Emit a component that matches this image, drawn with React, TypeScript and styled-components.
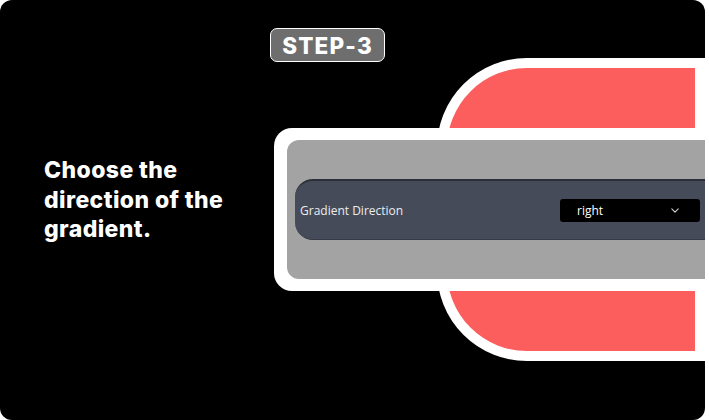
import React from "react";
import styled, { createGlobalStyle } from "styled-components";

const GlobalStyle = createGlobalStyle`
    body {
        margin: 0;
        background: #ffffff;
        font-family: Inter, "Liberation Sans", sans-serif;
    }
`;

export default function App() {
    return (
        <>
            <GlobalStyle />
            <Card>
                <Backdrop />
                <Badge>STEP-3</Badge>
                <Main>
                    <Heading>Choose the direction of the gradient.</Heading>
                    <Panel>
                        <PanelInner>
                            <Row>
                                <Label>Gradient Direction</Label>
                                <Select>
                                    <span>right</span>
                                    <Chevron viewBox="0 0 10 6">
                                        <path d="M1 1l4 4 4-4" />
                                    </Chevron>
                                </Select>
                            </Row>
                        </PanelInner>
                    </Panel>
                </Main>
            </Card>
        </>
    );
}

const Card = styled.div`
    position: relative;
    width: 705px;
    height: 420px;
    box-sizing: border-box;
    padding-top: 28px;
    background: #000000;
    border-radius: 12px;
    overflow: hidden;
    display: flex;
    flex-direction: column;
`;

const Backdrop = styled.div`
    position: absolute;
    left: 437px;
    top: 58px;
    width: 268px;
    height: 303px;
    box-sizing: border-box;
    border: 10px solid #ffffff;
    border-radius: 90px 0 0 90px;
    background: #fc5e5e;
`;

const Badge = styled.div`
    position: relative;
    align-self: flex-start;
    margin-left: 270px;
    width: 115px;
    height: 34px;
    box-sizing: border-box;
    display: flex;
    align-items: center;
    justify-content: center;
    background: #6e6e6e;
    border: 1.5px solid #ffffff;
    border-radius: 7px;
    color: #ffffff;
    font-size: 22.5px;
    font-weight: 800;
    letter-spacing: 1.2px;
`;

const Main = styled.div`
    position: relative;
    flex: 1;
    display: flex;
    align-items: flex-start;
`;

const Heading = styled.h1`
    margin: 94px 0 0 44px;
    width: 205px;
    flex-shrink: 0;
    color: #ffffff;
    font-size: 23px;
    line-height: 29.5px;
    font-weight: 800;
    letter-spacing: 0.4px;
`;

const Panel = styled.div`
    flex: 1;
    margin: 66px -30px 0 25px;
    padding: 12px 0 12px 13px;
    background: #ffffff;
    border-radius: 18px 0 0 18px;
`;

const PanelInner = styled.div`
    height: 139px;
    box-sizing: border-box;
    padding: 39px 0 0 8px;
    background: #a3a3a3;
    border-radius: 12px 0 0 12px;
`;

const Row = styled.div`
    height: 61px;
    box-sizing: border-box;
    padding: 0 35px 0 5px;
    display: flex;
    align-items: center;
    justify-content: space-between;
    background: #454b59;
    border-top: 2px solid #2b2f3a;
    border-bottom: 1px solid #353a46;
    border-radius: 18px 0 0 18px;
`;

const Label = styled.span`
    color: #ececec;
    font-family: "Open Sans", sans-serif;
    font-size: 12px;
    font-weight: 500;
`;

const Select = styled.div`
    width: 140px;
    height: 23px;
    box-sizing: border-box;
    padding: 0 21px 0 17px;
    display: flex;
    align-items: center;
    justify-content: space-between;
    background: #000000;
    border-radius: 3px;
    color: #ffffff;
    font-family: "Open Sans", sans-serif;
    font-size: 12px;
    font-weight: 500;
`;

const Chevron = styled.svg`
    width: 8px;
    height: 5px;
    fill: none;
    stroke: #d8d8d8;
    stroke-width: 1.3;
    stroke-linecap: round;
    stroke-linejoin: round;
`;
